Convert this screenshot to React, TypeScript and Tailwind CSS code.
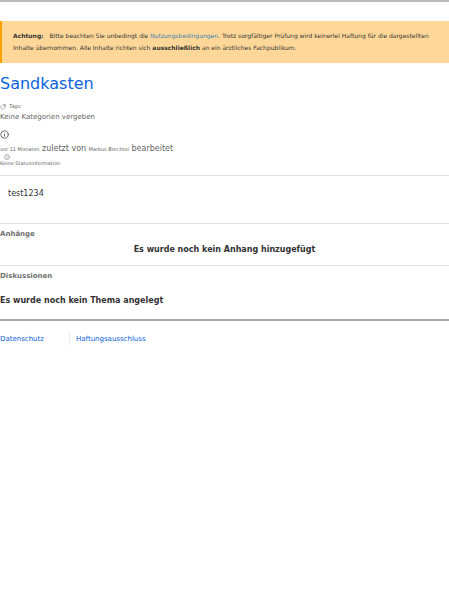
import { Info, Tag } from "lucide-react";

export default function App() {
  return (
    <div className="min-h-screen bg-white font-['DejaVu_Sans',sans-serif] text-[8px] text-[#333333]">
      <header className="h-[21px] border-t-2 border-[#bcbcbc]" />

      <aside className="border-l-2 border-[#ffa000] bg-[#ffd899] py-[9px] pr-2 pl-[11px] text-[6px] leading-[12px]">
        <p>
          <strong className="mr-1">Achtung:</strong> Bitte beachten Sie unbedingt die{" "}
          <a href="#nutzungsbedingungen" className="text-[#3c7fb0]">Nutzungsbedingungen</a>. Trotz sorgfältiger
          Prüfung wird keinerlei Haftung für die dargestellten Inhalte übernommen. Alle Inhalte richten sich{" "}
          <strong>ausschließlich</strong> an ein ärztliches Fachpublikum.
        </p>
      </aside>

      <main>
        <section className="border-b border-[#e2e2e2] pt-2 pb-[9px] text-[#666666]">
          <h1 className="text-[16px] leading-[26px] text-[#0b62dc]">
            <a href="#sandkasten">Sandkasten</a>
          </h1>
          <div className="mt-1 flex h-3 items-center gap-[3px] text-[5px] italic">
            <Tag className="size-[6px] rotate-90" />
            <span>Tags:</span>
          </div>
          <p className="text-[7px] leading-[8px]">Keine Kategorien vergeben</p>
          <Info className="mt-[9px] size-[9px] text-[#444444]" />
          <p className="mt-[5px] leading-[10px]">
            <small className="text-[5px]">vor 11 Monaten</small> zuletzt von{" "}
            <small className="text-[5px]">Markus Brechtel</small> bearbeitet
          </p>
          <Info className="ml-1 size-[6px]" />
          <p className="text-[5px] leading-[6px]">Keine Statusinformation</p>
        </section>

        <section className="h-12 border-b border-[#e2e2e2] px-2 pt-3">
          <p className="leading-[12px]">test1234</p>
        </section>

        <section className="border-b border-[#e2e2e2] pt-1 pb-[9px]">
          <h2 className="text-[7px] leading-[12px] font-bold text-[#707070]">Anhänge</h2>
          <p className="mt-1 text-center leading-[12px] font-bold">Es wurde noch kein Anhang hinzugefügt</p>
        </section>

        <section className="pt-1 pb-3">
          <h2 className="text-[7px] leading-[12px] font-bold text-[#707070]">Diskussionen</h2>
          <p className="mt-[13px] leading-[12px] font-bold">Es wurde noch kein Thema angelegt</p>
        </section>
      </main>

      <footer className="border-t-2 border-[#a8a8a8] pt-[11px] text-[7px] text-[#0b62dc]">
        <nav className="flex leading-[14px]">
          <a href="#datenschutz" className="w-[70px] border-r border-[#eeeeee]">Datenschutz</a>
          <a href="#haftungsausschluss" className="pl-[6px]">Haftungsausschluss</a>
        </nav>
      </footer>
    </div>
  );
}
